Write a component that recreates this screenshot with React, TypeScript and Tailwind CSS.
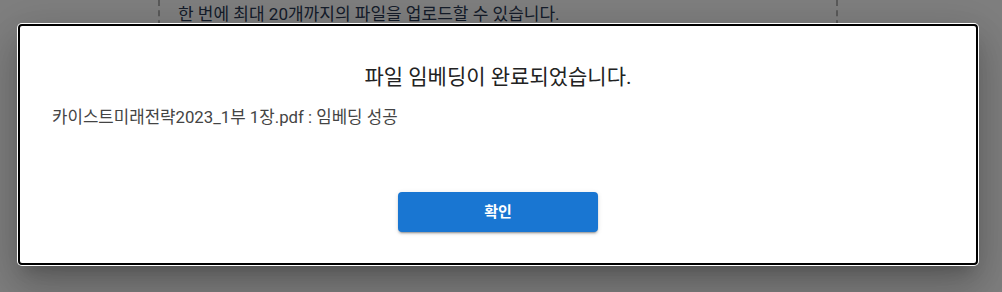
import React from 'react';

const font = { fontFamily: 'Roboto, "Noto Sans CJK KR", sans-serif' };

export default function App() {
  return (
    <div className="relative w-[1002px] h-[292px] overflow-hidden bg-white" style={font}>
      {/* page behind the dialog */}
      <div className="ml-[158px] w-[680px] h-[240px] border-x-2 border-dashed border-[#b4b4b4] pl-[18px] pt-[2px]">
        <p className="text-[17px] leading-[25px] text-[#2b3a55]">
          한 번에 최대 20개까지의 파일을 업로드할 수 있습니다.
        </p>
      </div>

      {/* backdrop */}
      <div className="absolute inset-0 bg-black/50">
        <div className="ml-[18px] mt-[24px] w-[960px] h-[241px] bg-white rounded-[4px] border-2 border-black shadow-[0_0_0_1px_#ffffff,0_11px_15px_-7px_rgba(0,0,0,0.2),0_24px_38px_3px_rgba(0,0,0,0.14),0_9px_46px_8px_rgba(0,0,0,0.12)] flex flex-col">
          <h2 className="pt-[37px] text-center text-[21px] leading-[28px] text-[#222222] font-normal">
            파일 임베딩이 완료되었습니다.
          </h2>
          <p className="mt-[14px] pl-[32px] text-[16.8px] leading-[24px] text-[#444444]">
            카이스트미래전략2023_1부 1장.pdf : 임베딩 성공
          </p>
          <div className="mt-[63px] flex justify-center">
            <button className="w-[200px] h-[40px] rounded-[4px] bg-[#1976d2] text-white text-[15px] font-bold shadow-[0_3px_1px_-2px_rgba(0,0,0,0.2),0_2px_2px_0_rgba(0,0,0,0.14),0_1px_5px_0_rgba(0,0,0,0.12)]">
              확인
            </button>
          </div>
        </div>
      </div>
    </div>
  );
}
